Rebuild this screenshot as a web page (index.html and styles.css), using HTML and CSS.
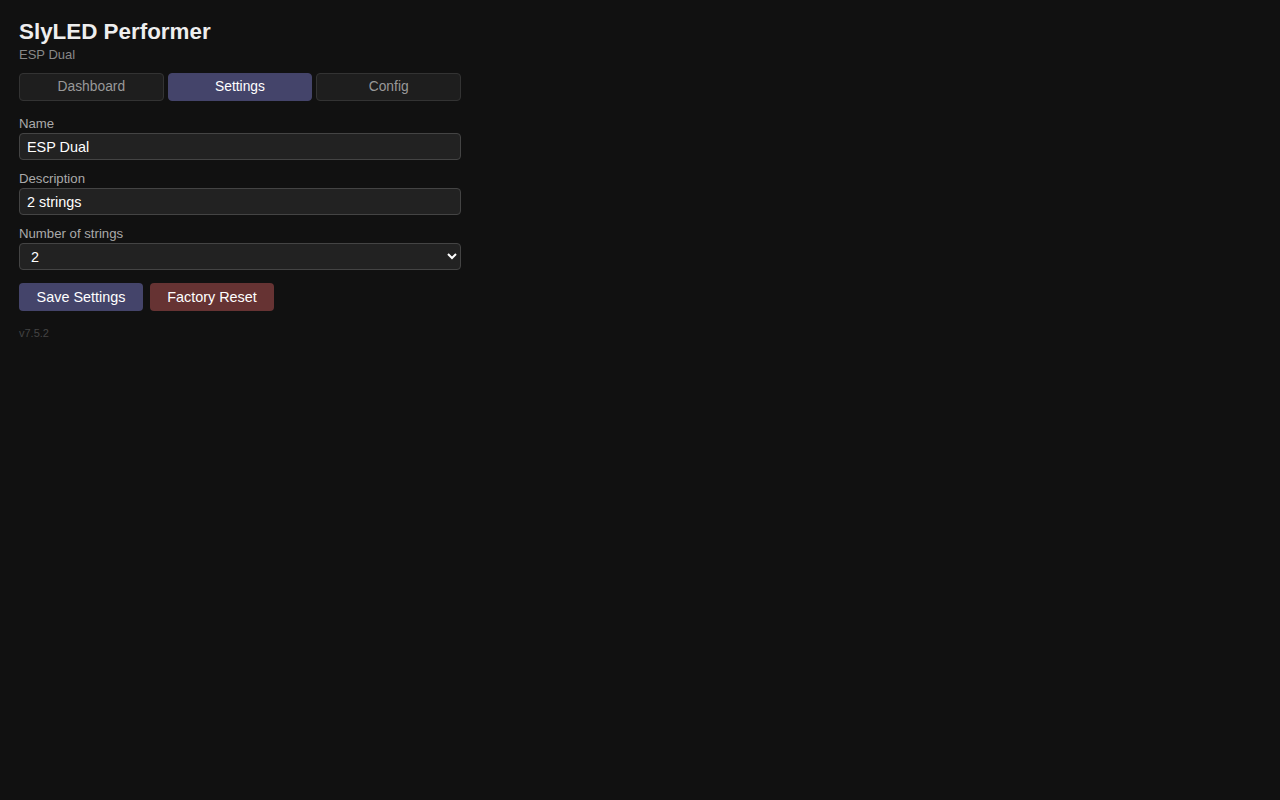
FILE: index.html
```html
<!DOCTYPE html>
<html>
<head>
<meta charset="utf-8">
<title>SlyLED Performer</title>
<link rel="stylesheet" href="styles.css">
</head>
<body>
<div class="wrap">
  <h1 class="title">SlyLED Performer</h1>
  <div class="sub">ESP Dual</div>
  <nav class="tabs">
    <button class="tab">Dashboard</button>
    <button class="tab active">Settings</button>
    <button class="tab">Config</button>
  </nav>
  <div class="field">
    <label class="lbl">Name</label>
    <input class="inp" type="text" value="ESP Dual">
  </div>
  <div class="field">
    <label class="lbl">Description</label>
    <input class="inp" type="text" value="2 strings">
  </div>
  <div class="field">
    <label class="lbl">Number of strings</label>
    <select class="inp sel">
      <option>1</option>
      <option selected>2</option>
    </select>
  </div>
  <div class="actions">
    <button class="btn save">Save Settings</button>
    <button class="btn reset">Factory Reset</button>
  </div>
  <div class="ver">v7.5.2</div>
</div>
</body>
</html>
```
FILE: styles.css
```css
html, body {
  margin: 0;
  background: #111111;
  color: #eeeeee;
  font-family: "Liberation Sans", Arial, sans-serif;
}
.wrap {
  width: 442px;
  padding: 18px 19px;
}
.title {
  margin: 0 0 1px;
  font-size: 22.4px;
  line-height: 28px;
  font-weight: bold;
  color: #eeeeee;
}
.sub {
  font-size: 13px;
  line-height: 16px;
  color: #888888;
  margin-bottom: 10px;
}
.tabs {
  display: flex;
  gap: 4px;
  margin-bottom: 15px;
}
.tab {
  flex: 1;
  height: 28px;
  background: #1e1e1e;
  border: 1px solid #333333;
  border-radius: 4px;
  color: #999999;
  font-family: inherit;
  font-size: 13.8px;
  padding: 0 0 2px;
}
.tab.active {
  background: #44446a;
  border-color: #44446a;
  color: #ffffff;
}
.field {
  display: flex;
  flex-direction: column;
  margin-bottom: 11px;
}
.lbl {
  font-size: 13.2px;
  line-height: 15px;
  color: #aaaaaa;
  margin-bottom: 2px;
}
.inp {
  box-sizing: border-box;
  height: 27px;
  background: #222222;
  border: 1px solid #444444;
  border-radius: 4px;
  color: #ffffff;
  font-family: inherit;
  font-size: 14.4px;
  padding: 0 7px;
  margin: 0;
}
.sel {
  padding: 0 4px 0 7px;
}
.actions {
  display: flex;
  gap: 7px;
  margin-top: 13px;
}
.btn {
  width: 124px;
  height: 28px;
  border: none;
  border-radius: 4px;
  color: #ffffff;
  font-family: inherit;
  font-size: 14.4px;
  padding: 0;
}
.save { background: #44446a; }
.reset { background: #663333; }
.ver {
  margin-top: 16px;
  font-size: 11px;
  color: #444444;
}
```
